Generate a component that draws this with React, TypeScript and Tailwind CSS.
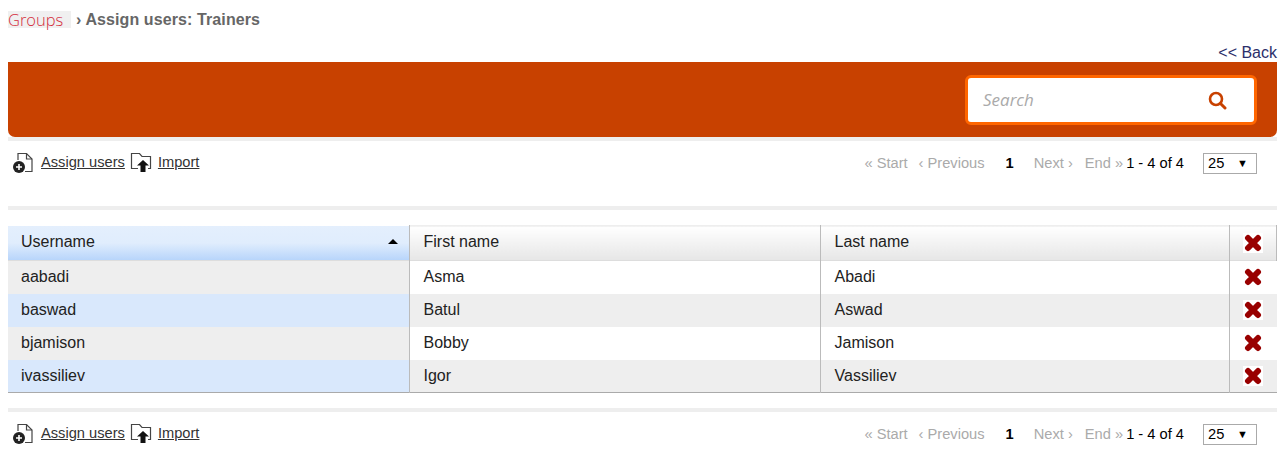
import React from 'react';

const users = [
  { username: 'aabadi', first: 'Asma', last: 'Abadi' },
  { username: 'baswad', first: 'Batul', last: 'Aswad' },
  { username: 'bjamison', first: 'Bobby', last: 'Jamison' },
  { username: 'ivassiliev', first: 'Igor', last: 'Vassiliev' },
];

const AssignIcon = () => (
  <svg width="22" height="22" viewBox="0 0 22 22" className="shrink-0">
    <path d="M6 9V2.500h8.500l5.500 5.500v12.500h-7" fill="none" stroke="#444" strokeWidth="1.200" />
    <path d="M14.500 2.500V8H20" fill="none" stroke="#444" strokeWidth="1.200" />
    <circle cx="7" cy="16" r="6" fill="#222" />
    <path d="M4 16h6M7 13v6" stroke="#fff" strokeWidth="1.600" />
  </svg>
);

const ImportIcon = () => (
  <svg width="22" height="20" viewBox="0 0 22 20" className="shrink-0">
    <path d="M8 16.500H1.500V1.500h8l2.500 3h8.500v12H18" fill="none" stroke="#444" strokeWidth="1.200" />
    <path d="M13 8l6 5.500h-3.500V20h-5v-6.500H7z" fill="#111" />
  </svg>
);

const DeleteIcon = ({ box }: { box?: boolean }) => (
  <span className={`inline-flex w-5 h-5 items-center justify-center ${box ? 'bg-white' : ''}`}>
    <svg width="18" height="18" viewBox="0 0 18 18">
      <path d="M4 4l10 10M14 4L4 14" stroke="#990000" strokeWidth="6" strokeLinecap="round" />
    </svg>
  </span>
);

const Toolbar = () => (
  <div className="flex items-start justify-between h-[65px] font-['Liberation_Sans',sans-serif] text-[14.67px]">
    <div className="flex items-center pl-[4px] pt-[10px] text-[#333]">
      <AssignIcon />
      <a className="ml-[7px] underline">Assign users</a>
      <span className="ml-[5px]"><ImportIcon /></span>
      <a className="ml-[6px] underline">Import</a>
    </div>
    <div className="flex items-center pt-[11px] pr-[20px] text-[#aaa] whitespace-nowrap">
      <span>« Start</span>
      <span className="ml-[11px]">‹ Previous</span>
      <span className="ml-[21px] font-bold text-black">1</span>
      <span className="ml-[20px]">Next ›</span>
      <span className="ml-[12px]">End »</span>
      <span className="ml-[3px] text-black">1 - 4 of 4</span>
      <span className="ml-[19px] w-[54px] h-[21px] border border-[#aaa] flex items-center justify-between pl-[4px] pr-[8px] text-black">
        25
        <span className="text-[11px]">▼</span>
      </span>
    </div>
  </div>
);

export default function App() {
  return (
    <div className="w-[1281px] h-[462px] overflow-hidden bg-white pl-2 pr-1 font-['Liberation_Sans',sans-serif] text-base text-black">
      <div className="h-[44px] pt-[11px] flex items-start">
        <a className="w-[63px] h-[17px] bg-[#f0f0f0] text-[#d42c3c] font-['Open_Sans',sans-serif] font-light text-[16.5px] leading-[17px]">Groups</a>
        <span className="ml-[5px] leading-[17px] font-bold tracking-[0.1px] text-[#666]">› Assign users: Trainers</span>
      </div>
      <div className="h-[18px] text-right leading-[18px] text-[#2c2f6b]">&lt;&lt; Back</div>

      <div className="border-b-4 border-[#eeeeee]">
        <div className="h-[75px] bg-[#c84100] rounded-b-[7px] flex items-center justify-end pr-5">
          <div className="w-[292px] h-[50px] bg-white border-[3px] border-[#ff6600] rounded-[6px] flex items-center justify-between pl-[15px] pr-[27px]">
            <span className="italic text-[17px] text-[#aaa] font-['Open_Sans',sans-serif]">Search</span>
            <svg width="20" height="20" viewBox="0 0 20 20">
              <circle cx="9" cy="9" r="6" fill="none" stroke="#c84100" strokeWidth="2.600" />
              <path d="M13.500 13.500l4.500 4.500" stroke="#c84100" strokeWidth="3" strokeLinecap="round" />
            </svg>
          </div>
        </div>
      </div>

      <Toolbar />

      <div className="h-1 bg-[#eeeeee]" />

      <table className="mt-[15px] w-[1269px] table-fixed border-collapse text-base text-[#222] border-b border-[#aaa]">
        <colgroup>
          <col className="w-[401px]" />
          <col className="w-[411px]" />
          <col className="w-[409px]" />
          <col />
        </colgroup>
        <thead>
          <tr className="h-[35px] border-b border-[#dddddd]">
            <th className="bg-gradient-to-b from-[#e4effd] via-[#e0edfd] to-[#b8d5fb] border-r border-[#bbb] pl-[13px] pr-[11px] pb-[2px] font-normal text-left">
              <div className="flex items-center justify-between">
                Username
                <span className="w-0 h-0 border-x-[5px] border-x-transparent border-b-[5px] border-b-black" />
              </div>
            </th>
            <th className="bg-gradient-to-b from-white to-[#e6e6e6] border-r border-t border-[#bbb] border-t-[#eeeeee] pl-[14px] pb-[2px] font-normal text-left">First name</th>
            <th className="bg-gradient-to-b from-white to-[#e6e6e6] border-r border-t border-[#bbb] border-t-[#eeeeee] pl-[14px] pb-[2px] font-normal text-left">Last name</th>
            <th className="bg-gradient-to-b from-white to-[#e6e6e6] border-r border-t border-[#bbb] border-t-[#eeeeee] font-normal text-center">
              <div className="flex justify-center"><DeleteIcon box /></div>
            </th>
          </tr>
        </thead>
        <tbody>
          {users.map((user, i) => {
            const odd = i % 2 === 1;
            return (
              <tr key={user.username} className="h-[33px]">
                <td className={`border-r border-[#bbb] pl-[13px] ${odd ? 'bg-[#d9e8fc]' : 'bg-[#eeeeee]'}`}>{user.username}</td>
                <td className={`border-r border-[#bbb] pl-[14px] ${odd ? 'bg-[#eeeeee]' : 'bg-white'}`}>{user.first}</td>
                <td className={`border-r border-[#bbb] pl-[14px] ${odd ? 'bg-[#eeeeee]' : 'bg-white'}`}>{user.last}</td>
                <td className={`p-0 ${odd ? 'bg-[#eeeeee]' : 'bg-white'}`}>
                  <div className="flex justify-center items-center"><DeleteIcon box={odd} /></div>
                </td>
              </tr>
            );
          })}
        </tbody>
      </table>

      <div className="h-1 bg-[#eeeeee] mt-[15px]" />
      <Toolbar />
    </div>
  );
}
